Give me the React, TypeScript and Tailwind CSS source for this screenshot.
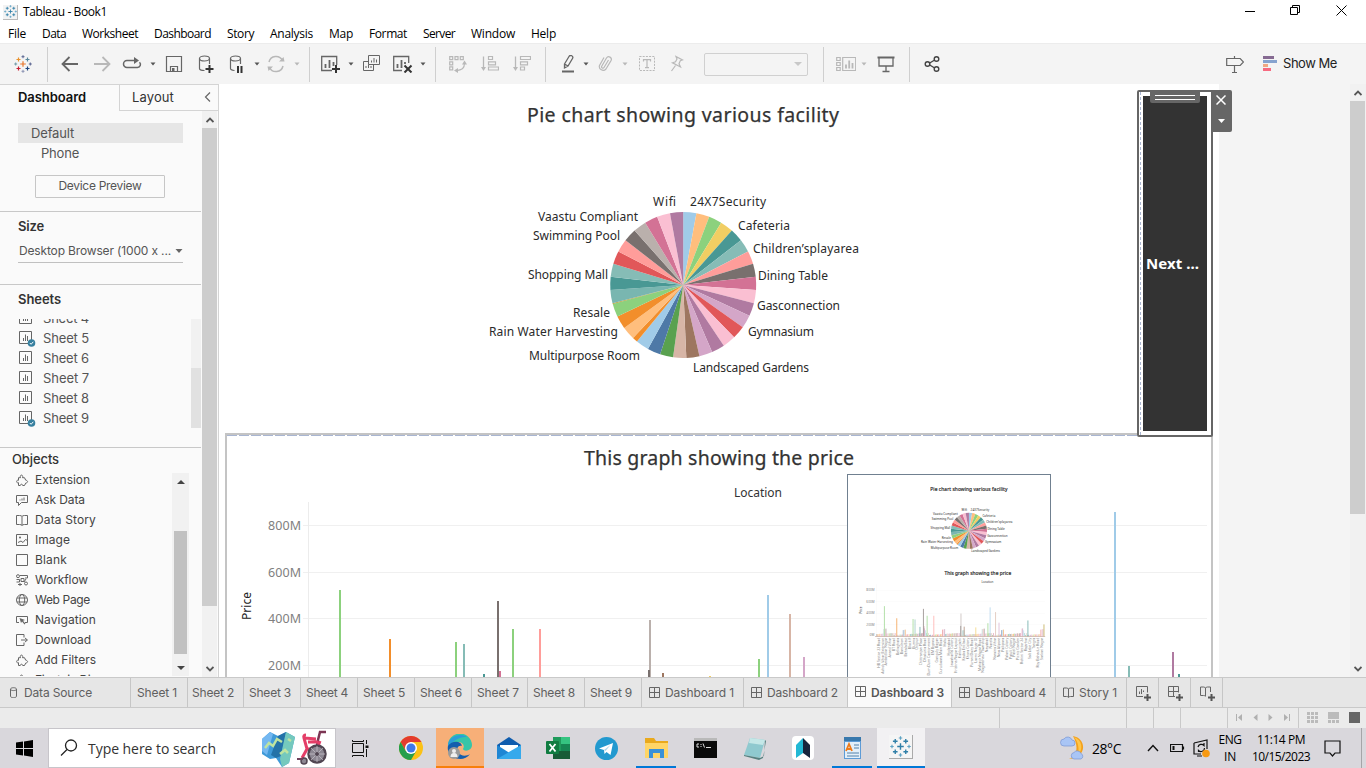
import React, { useLayoutEffect, useRef } from "react";
import type { ReactNode } from "react";

const UI = "font-['Inter','Liberation_Sans',sans-serif]";
const SEGOE = "font-['Open_Sans','Noto_Sans',sans-serif]";

/* Text whose tracking is computed so that it fills a given width. */
function Fit({ w, children, className = "" }: { w: number; children: string; className?: string }) {
  const ref = useRef<HTMLSpanElement>(null);
  useLayoutEffect(() => {
    const el = ref.current;
    if (!el) return;
    el.style.letterSpacing = "0px";
    const natural = el.getBoundingClientRect().width;
    el.style.letterSpacing = `${(w - natural) / children.length}px`;
  }, [w, children]);
  return (
    <span ref={ref} className={`inline-block whitespace-pre ${className}`}>
      {children}
    </span>
  );
}

function Svg({ w = 18, h = 18, className = "", children }: { w?: number; h?: number; className?: string; children: ReactNode }) {
  return (
    <svg width={w} height={h} viewBox={`0 0 ${w} ${h}`} className={`block shrink-0 ${className}`} fill="none">
      {children}
    </svg>
  );
}

const BLUE_MARK = ["#2f7fa8", "#2f7fa8", "#2f7fa8", "#2f7fa8", "#5fa3c4", "#5fa3c4", "#5fa3c4", "#5fa3c4", "#2f7fa8"];
const COLOR_MARK = ["#e8912d", "#59879b", "#c72035", "#1f457e", "#5b6591", "#7199a6", "#5b6591", "#8a92b2", "#e8762c"];

function TableauMark({ size, colors, className = "" }: { size: number; colors: string[]; className?: string }) {
  const plus = (x: number, y: number, r: number) => `M${x - r} ${y}h${2 * r}M${x} ${y - r}v${2 * r}`;
  const marks: [number, number, number][] = [
    [4.5, 4.5, 2], [13.5, 4.5, 2], [4.5, 13.5, 2], [13.5, 13.5, 2],
    [9, 1.7, 1.5], [1.7, 9, 1.5], [16.3, 9, 1.5], [9, 16.3, 1.5], [9, 9, 2.8],
  ];
  return (
    <svg width={size} height={size} viewBox="0 0 18 18" className={`block shrink-0 ${className}`}>
      {marks.map(([x, y, r], i) => (
        <path key={i} d={plus(x, y, r)} stroke={colors[i]} strokeWidth={i < 4 || i === 8 ? 1.2 : 1} />
      ))}
    </svg>
  );
}

function Caret({ light = false, className = "" }: { light?: boolean; className?: string }) {
  return (
    <svg width="6" height="4" viewBox="0 0 6 4" className={`block shrink-0 ${className}`}>
      <path d="M.5 .5h5L3 3.5z" fill={light ? "#b8b8b8" : "#555"} />
    </svg>
  );
}

const Sep = ({ className = "" }: { className?: string }) => <div className={`h-[35px] w-px shrink-0 bg-[#cfcfcf] ${className}`} />;

/* ---------- Charts ---------- */

const SLICES: [string, number][] = [
  ["#a0cbe8", 1], ["#ffbe7d", 1], ["#8cd17d", 1], ["#f1ce63", 1], ["#499894", 1], ["#86bcb6", 1], ["#ff9d9a", 1],
  ["#79706e", 1], ["#d37295", 1], ["#fabfd2", 1], ["#b07aa1", 1], ["#d4a6c8", 1], ["#e15759", 1], ["#fabfd2", 1],
  ["#b07aa1", 1], ["#d4a6c8", 1], ["#9d7660", 1], ["#d7b5a6", 1], ["#59a14f", 1], ["#4e79a7", 1], ["#a0cbe8", 1],
  ["#f28e2b", 0.4], ["#ffbe7d", 1], ["#f28e2b", 1], ["#8cd17d", 1], ["#b6992d", 0.07], ["#79b6b0", 1], ["#499894", 1],
  ["#86bcb6", 1], ["#e15759", 1], ["#ff9d9a", 1], ["#79706e", 1], ["#bab0ac", 1], ["#d37295", 1], ["#fabfd2", 1], ["#b07aa1", 1],
];

const PIE_LABELS: [string, number, number, number][] = [
  ["Wifi", 653, 206, 23], ["24X7Security", 690, 206, 76], ["Cafeteria", 738, 230, 52],
  ["Children’splayarea", 753, 253, 106], ["Dining Table", 758, 280, 70], ["Gasconnection", 757, 310, 83],
  ["Gymnasium", 748, 336, 66], ["Landscaped Gardens", 693, 372, 116], ["Multipurpose Room", 529, 360, 111],
  ["Rain Water Harvesting", 489, 336, 129], ["Resale", 573, 317, 37], ["Shopping Mall", 528, 279, 80],
  ["Swimming Pool", 533, 240, 87], ["Vaastu Compliant", 538, 221, 100],
];

function Pie({ soft = false }: { soft?: boolean }) {
  const total = SLICES.reduce((s, [, v]) => s + v, 0);
  const cx = 683.2, cy = 285, r = 73;
  let acc = 0;
  const at = (t: number) => `${cx + r * Math.sin(t)} ${cy - r * Math.cos(t)}`;
  return (
    <g fontFamily="'Noto Sans', sans-serif">
      <text x="527" y="122" fontSize="19.5" fill="#333" stroke="#333" strokeWidth={soft ? 0.8 : 0.25} textLength="312">Pie chart showing various facility</text>
      {SLICES.map(([color, v], i) => {
        const a = (acc / total) * Math.PI * 2;
        acc += v;
        const b = (acc / total) * Math.PI * 2;
        return <path key={i} d={`M${cx} ${cy}L${at(a)}A${r} ${r} 0 0 1 ${at(b)}Z`} fill={color} />;
      })}
      {PIE_LABELS.map(([t, x, y, w]) => (
        <text key={t} x={x} y={y} fontSize="12" fill="#2a2a2a" textLength={w}>{t}</text>
      ))}
    </g>
  );
}

const BARS: [number, number, string][] = [
  [339, 590, "#8cd17d"], [389, 639, "#f28e2b"], [455, 642, "#8cd17d"], [463, 644, "#86bcb6"], [483, 674, "#499894"],
  [499, 671, "#d37295"], [497, 601, "#79706e"], [512, 629, "#8cd17d"], [539, 629, "#ff9d9a"], [649, 620, "#bab0ac"],
  [648, 670, "#79706e"], [662, 673, "#9d7660"], [709, 676, "#f1ce63"], [758, 659, "#8cd17d"], [767, 595, "#a0cbe8"],
  [789, 614, "#d7b5a6"], [803, 657, "#d4a6c8"], [920, 648, "#499894"], [985, 664, "#b6992d"], [1114, 512, "#a0cbe8"],
  [1128, 666, "#86bcb6"], [1172, 652, "#b07aa1"], [1178, 674, "#499894"],
];

const LOCATIONS = [
  "HB Sector 22 Road", "Ashok Vihar Extension", "Ambedkar Nagar", "Anand Vihar", "BT Road", "Beliaghata", "Bansdroni", "Behala East",
  "Block F", "Burma", "Chitpur", "Chittranjan Place", "Dhakuria Road", "Dum Dum Cantonment", "EM Bypass", "Ganguly Bagan",
  "Gurudwara Main Road", "Haltu", "Hyderabad", "Jawaharlal Colony", "Krishna Nagar Layout", "Kankurgachi", "Kasba Enclave", "Khora Colony",
  "Purani Dairy Road", "Laxmi Nagar III", "Mahavir Nagar Road", "Nagarbhavi Township", "Nayabad", "Narela", "Naraina Vihar", "New Alipore",
  "Paikpara", "Palam Colony", "Patuli Colony", "Patel Nagar", "Picnic Garden", "Rohini Sector 24", "Rajarhat", "Salt Lake City",
  "Tangra", "Roy Bahadur Road", "Sarkari Nagar",
];

const LOW_BARS = Array.from({ length: 165 }, (_, i) => {
  const n = (i * 7919 + 31) % 97;
  return { x: 309 + i * 4.1, h: 5 + (n % 9) + (n % 7 === 0 ? 19 : 0), c: SLICES[n % SLICES.length][0] };
});

function Price({ end = 1207, soft = false }: { end?: number; soft?: boolean }) {
  return (
    <g fontFamily="'Noto Sans', sans-serif">
      <text x="584" y="465" fontSize="19.5" fill="#333" stroke="#333" strokeWidth={soft ? 0.8 : 0.25} textLength="270">This graph showing the price</text>
      <text x="734" y="497" fontSize="12" fill="#333" textLength="48">Location</text>
      {[["800M", 525], ["600M", 572], ["400M", 618], ["200M", 665]].map(([t, y]) => (
        <g key={t}>
          <rect x="303" y={y} width={end - 303} height="1" fill="#f0f0f0" />
          <text x="268" y={Number(y) + 5} fontSize="12.5" fill="#808080" textLength="33">{t}</text>
        </g>
      ))}
      <rect x="308" y="502" width="1" height="212" fill="#ececec" />
      <text transform="translate(251 620) rotate(-90)" fontSize="12" fill="#222" textLength="28">Price</text>
      <g opacity={soft ? 0.65 : 1}>
        {LOW_BARS.map((b, i) => <rect key={i} x={b.x} y={712 - b.h} width="3" height={b.h} fill={b.c} />)}
        {BARS.filter(([x]) => x < end).map(([x, y, c]) => (
          <rect key={x} x={x} y={y} width={soft ? 4 : 2} height={712 - y} fill={c} />
        ))}
      </g>
      <rect x="303" y="712" width={end - 303} height="2" fill="#b08878" />
      {soft && <text x="281" y="710" fontSize="13" fill="#787878">0M</text>}
      {soft && LOCATIONS.map((t, i) => (
        <text key={t} transform={`translate(${322 + i * 15.7} 718) rotate(-90)`} textAnchor="end" fontSize="14" fill="#888">{t}</text>
      ))}
    </g>
  );
}

/* ---------- Title, menu and toolbar ---------- */

function TitleBar() {
  return (
    <div className={`flex h-6 items-center bg-white text-black ${SEGOE}`}>
      <div className="ml-[3px] flex h-[15px] w-[15px] items-center justify-center border-r border-b border-[#bbb] bg-[#f3f3f3]">
        <TableauMark size={13} colors={BLUE_MARK} />
      </div>
      <Fit w={84} className="ml-[5px] text-[12px]">Tableau - Book1</Fit>
      <div className="ml-auto flex items-center pr-[19px] pb-[3px]">
        <Svg w={10} h={10}><path d="M0 5.5h10" stroke="#000" /></Svg>
        <Svg w={11} h={11} className="ml-[35px]"><path d="M.5 2.5h7v7h-7zM2.5 2.5v-2h7v7h-2" stroke="#000" /></Svg>
        <Svg w={11} h={11} className="ml-[35px]"><path d="M.5 .5l10 10M10.5 .5l-10 10" stroke="#000" /></Svg>
      </div>
    </div>
  );
}

const MENU: [string, number, number][] = [
  ["File", 34, 18], ["Data", 40, 24], ["Worksheet", 72, 56], ["Dashboard", 73, 57], ["Story", 43, 27], ["Analysis", 59, 43],
  ["Map", 40, 24], ["Format", 54, 38], ["Server", 48, 32], ["Window", 60, 44], ["Help", 40, 25],
];

function MenuBar() {
  return (
    <div className={`flex h-[19px] items-center bg-white pl-2 text-[12px] text-black ${SEGOE}`}>
      {MENU.map(([t, cell, w]) => (
        <div key={t} className="shrink-0" style={{ width: cell }}><Fit w={w}>{t}</Fit></div>
      ))}
    </div>
  );
}

function Toolbar() {
  const d = "#666", l = "#b8b8b8", k = "#333";
  return (
    <div className={`flex h-[41px] items-center border-t border-[#ececec] bg-[#f4f4f4] ${UI}`}>
      <TableauMark size={18} colors={COLOR_MARK} className="ml-[14px]" />
      <Sep className="ml-[15px]" />
      <Svg className="ml-[13px]"><path d="M1.500 9h15.500M8.500 2L1.500 9l7 7" stroke={d} strokeWidth="1.800" /></Svg>
      <Svg className="ml-[14px]"><path d="M1 9h15.500M9.500 2l7 7-7 7" stroke={l} strokeWidth="1.800" /></Svg>
      <Svg w={20} className="ml-[11px]"><path d="M15 12.500h.500a3 3 0 0 0 2-5.200M7 12.500h8M7 12.500H5a3.500 3.500 0 0 1 0-7h8" stroke={d} strokeWidth="1.500" /><path d="M12 2l5 3.500-5 3.500z" fill={d} /></Svg>
      <Caret className="ml-[8px]" />
      <Svg className="ml-[9px]"><path d="M1.500 1.500h15v15h-15zM5.500 16v-4.500h7V16" stroke={d} strokeWidth="1.200" /><path d="M7 13h2.500v3H7z" fill={d} /></Svg>
      <Svg className="ml-[14px]"><ellipse cx="7.500" cy="3.500" rx="5" ry="2.500" stroke={d} strokeWidth="1.200" /><path d="M2.500 3.500v10c0 1.200 2 2 5 2M12.500 3.500V9" stroke={d} strokeWidth="1.200" /><path d="M12.500 10v8M8.500 14h8" stroke={k} strokeWidth="2" /></Svg>
      <Svg className="ml-[13px]"><ellipse cx="7.500" cy="3.500" rx="5" ry="2.500" stroke={d} strokeWidth="1.200" /><path d="M2.500 3.500v10c0 1 1.500 1.700 4 2M12.500 3.500V9" stroke={d} strokeWidth="1.200" /><path d="M10 11v7M13.500 11v7" stroke={k} strokeWidth="2" /></Svg>
      <Caret className="ml-[8px]" />
      <Svg className="ml-[7px]"><path d="M2 7a7.200 7.200 0 0 1 13.500-1.500M16 11A7.200 7.200 0 0 1 2.500 12.500" stroke={l} strokeWidth="1.500" /><path d="M12 6.500h5.500L16.500 2zM6 11.500H.500l1 4.500z" fill={l} /></Svg>
      <Caret light className="ml-[9px]" />
      <Sep className="ml-[9px]" />
      <Svg w={20} className="ml-[11px]"><path d="M11 15.500H.700V1.500h15V10" stroke={d} strokeWidth="1.300" /><path d="M4.500 9v4M8.500 5v8M12.500 7v4" stroke={d} strokeWidth="1.800" /><path d="M15 10v8M11 14h8" stroke={k} strokeWidth="2" /></Svg>
      <Caret className="ml-[7px]" />
      <Svg className="ml-[8px]"><path d="M6.500 .5h11v9h-11zM11.500 9.500v6H1.500v-9h5" stroke={d} /><path d="M9.500 5.500v2M12 3v4.500M14.500 4.500v3M4 11v2M6.500 9.500V13M9 11v2" stroke={d} /></Svg>
      <Svg w={20} className="ml-[13px]"><path d="M9 15.500H.700V1.500h15V8" stroke={d} strokeWidth="1.300" /><path d="M4.500 9v4M8.500 5v8M12 7v2" stroke={d} strokeWidth="1.800" /><path d="M11.500 10.500l7 7M18.500 10.500l-7 7" stroke={k} strokeWidth="2" /></Svg>
      <Caret className="ml-[7px]" />
      <Sep className="ml-[9px]" />
      <Svg className="ml-[13px]"><path d="M.7 1.700h3v3h-3zM6 1.700h3v3H6zM11.300 1.700h3v3h-3zM.7 6.800h3v3h-3zM.7 11.800h3v3h-3zM15.500 8c0 5-2 7-9 7.500" stroke={l} strokeWidth="1.200" /><path d="M13 9.500L15.500 5.500 18 9.500zM9 13v5l-4-2.500z" fill={l} /></Svg>
      <Svg className="ml-[14px]"><path d="M2.500 1.500V14" stroke={l} strokeWidth="1.300" /><path d="M0 12h5l-2.500 4z" fill={l} /><path d="M7.500 1.500h4v3h-4zM7.500 6.800h7v3h-7zM7.500 12h10v3h-10z" stroke={l} strokeWidth="1.200" /></Svg>
      <Svg className="ml-[14px]"><path d="M2.500 1.500V14" stroke={l} strokeWidth="1.300" /><path d="M0 12h5l-2.500 4z" fill={l} /><path d="M7.500 1.500h10v3h-10zM7.500 6.800h7v3h-7zM7.500 12h4v3h-4z" stroke={l} strokeWidth="1.200" /></Svg>
      <Sep className="ml-[14px]" />
      <Svg w={14} className="ml-[15px]"><path d="M3.500 9L8 1.500a1.500 1.500 0 0 1 3.500 2L7 11l-3.500 2zM3.500 9L7 11" stroke={d} strokeWidth="1.300" /><path d="M1 16.500h12" stroke={d} strokeWidth="2" /></Svg>
      <Caret className="ml-[8px]" />
      <Svg w={14} className="ml-[9px]"><path d="M10.500 5L6 12.500a1.300 1.300 0 0 1-2.300-1.300L8.500 3a2.600 2.600 0 0 1 4.500 2.600L8 14a3.800 3.800 0 0 1-6.500-3.600L6 2.500" stroke={l} strokeWidth="1.200" /></Svg>
      <Caret light className="ml-[10px]" />
      <Svg className="ml-[10px]"><rect x="1.500" y="1.500" width="15" height="14" stroke={l} strokeDasharray="2 1.200" /><path d="M5.500 6.500V4.700h7v1.800M9 4.700v8M7 12.700h4" stroke={l} strokeWidth="1.200" /></Svg>
      <Svg w={14} className="ml-[14px]"><path d="M6 1.500l6.500 3.500-2.200.8-1.300 3 1.500 3.200-8-4.200 3-1L7 4zM5.500 10.500L1.500 16" stroke={l} strokeWidth="1.200" /></Svg>
      <div className="ml-[20px] flex h-[23px] w-[104px] items-center justify-end rounded-[2px] border border-[#d0d0d0] pr-[5px]">
        <svg width="8" height="4" viewBox="0 0 8 4"><path d="M0 0h8L4 4z" fill="#c8c8c8" /></svg>
      </div>
      <Sep className="ml-[15px]" />
      <Svg w={20} className="ml-[12px]"><path d="M.7 2.500h3.500v3H.7zM.7 7.500h3.500v3H.7zM.7 12.500h3.500v3H.7zM6.700 2.500h13v13h-13z" stroke={l} strokeWidth="1.200" /><path d="M10 9.500v4M13.200 5.500v8M16.500 8v5.500" stroke={l} strokeWidth="1.800" /></Svg>
      <Caret light className="ml-[5px]" />
      <Svg className="ml-[10px]"><path d="M.5 2.500h17" stroke={d} strokeWidth="2" /><path d="M2 3v8h14V3M9 11v5M5.500 16.500h7" stroke={d} strokeWidth="1.300" /></Svg>
      <Sep className="ml-[14px]" />
      <Svg w={16} className="ml-[14px]"><circle cx="3.500" cy="9" r="2.300" stroke="#444" strokeWidth="1.400" /><circle cx="12.500" cy="4" r="2.300" stroke="#444" strokeWidth="1.400" /><circle cx="12.500" cy="14" r="2.300" stroke="#444" strokeWidth="1.400" /><path d="M5.700 8l5-3M5.700 10l5 3" stroke="#444" strokeWidth="1.400" /></Svg>
      <Svg className="ml-auto"><path d="M.7 3.500h13.500L17.500 7l-3.300 3.500H.7zM8.500 1v2.500M8.500 10.500v7M6 17.500h5" stroke={d} strokeWidth="1.200" /></Svg>
      <Svg w={14} h={16} className="ml-[19px]"><path d="M0 1.500h11" stroke="#866a92" strokeWidth="3" /><path d="M0 5.500h14" stroke="#86a3cf" strokeWidth="3" /><path d="M0 9.500h5" stroke="#f0a883" strokeWidth="3" /><path d="M0 13.500h8" stroke="#f76a80" strokeWidth="3" /></Svg>
      <Fit w={54} className="mr-[29px] ml-[6px] text-[13px] text-[#222]">Show Me</Fit>
    </div>
  );
}

/* ---------- Left pane ---------- */

function SheetIcon({ used }: { used?: boolean }) {
  return (
    <Svg w={17} h={17} className="mt-px">
      <path d="M.500 1.500h12v12H.500z" stroke="#666" />
      <path d="M4.500 8v3M6.500 4.500V11M8.500 6v5" stroke="#666" />
      {used && <><circle cx="12.500" cy="13" r="3.800" fill="#37809f" /><path d="M10.800 13l1.300 1.300 2.200-2.500" stroke="#fff" /></>}
    </Svg>
  );
}

const SHEETS: [string, boolean][] = [["Sheet 4", false], ["Sheet 5", true], ["Sheet 6", false], ["Sheet 7", false], ["Sheet 8", false], ["Sheet 9", true]];

const puzzle = <path d="M2.500 11.500V8.700C.3 9.800-.2 5.500 2.500 6.300V3.700h2C3.300 .2 7.700 .2 6.500 3.700h2l1.200 2.500c2.500.3 2.500 2.600 0 2.900L8.500 11.500H6.700c-.2-1.700-2.200-1.700-2.400 0z" stroke="#666" />;

const OBJECTS: [string, number, ReactNode][] = [
  ["Extension", 55, puzzle],
  ["Ask Data", 50, <path d="M.5 1.500h11v7h-6l-3 3v-3h-2zM4 6.500v-1M6 6.500v-2M8 6.500v-3" stroke="#666" />],
  ["Data Story", 61, <path d="M6 2.500v9M.500 1.500h3Q5.500 1.500 6 2.500 6.500 1.500 8.500 1.500h3v9h-3Q6.500 10.500 6 11.500 5.500 10.500 3.500 10.500h-3z" stroke="#666" />],
  ["Image", 35, <><path d="M.500 .5h11v11H.500zM2 8.500l3-1.500 2 1.500 2.500-3 2 1" stroke="#666" /><circle cx="4" cy="3.500" r="1" fill="#666" /></>],
  ["Blank", 32, <path d="M.500 .5h11v11H.500z" stroke="#666" />],
  ["Workflow", 53, <><circle cx="2" cy="2.200" r="1.500" stroke="#666" /><circle cx="10" cy="9.500" r="1.500" stroke="#666" /><path d="M4 1.500h7.500v2.500H9M5 4.500h3v3H5zM.500 5.500h3v2.500h-3M4 9v3M2 10.500h4M8 8l2-3" stroke="#666" /></>],
  ["Web Page", 55, <><circle cx="6" cy="6" r="5.500" stroke="#666" /><ellipse cx="6" cy="6" rx="2.700" ry="5.500" stroke="#666" /><path d="M1 4h10M1 8h10" stroke="#666" /></>],
  ["Navigation", 61, <><path d="M3 8.500H.500v-6h11v6H9" stroke="#666" /><path d="M3.500 4l5.500 2-2 .8 2.500 3-1 .7-2.500-3L5 9z" fill="#666" /></>],
  ["Download", 56, <path d="M8 3.500V.500H.500v11H8v-3M5 6h6M9 4l2.500 2L9 8" stroke="#666" />],
  ["Add Filters", 61, puzzle],
  ["Einstein Discovery", 98, puzzle],
];

function Chevron({ up }: { up?: boolean }) {
  return <Svg w={8} h={6}><path d={up ? "M.5 5L4 1.500 7.500 5" : "M.5 1L4 4.500 7.500 1"} stroke="#555" strokeWidth="1.800" /></Svg>;
}

function SidePane() {
  return (
    <div className={`flex h-[593px] w-[219px] shrink-0 flex-col border-t border-r border-[#d4d4d4] bg-[#fafafa] text-[13px] text-[#555] ${UI}`}>
      <div className="flex h-[26px] shrink-0">
        <div className="w-[119px] pt-[3px] pl-[18px]"><Fit w={68} className="font-semibold text-[#111]">Dashboard</Fit></div>
        <div className="flex flex-1 justify-between border-b border-l border-[#d4d4d4] pt-[3px] pr-[7px] pl-3">
          <Fit w={42} className="text-[#333]">Layout</Fit>
          <Svg w={7} h={10} className="mt-1"><path d="M6 .5L1.500 5 6 9.500" stroke="#666" strokeWidth="1.200" /></Svg>
        </div>
      </div>
      <div className="flex min-h-0 flex-1">
        <div className="flex w-[201px] flex-col overflow-hidden">
          <div className="mt-3 ml-[18px] flex h-5 w-[165px] shrink-0 items-center bg-[#e6e6e6] pt-[2px] pl-[13px]"><Fit w={43}>Default</Fit></div>
          <div className="ml-[41px] flex h-5 shrink-0 items-center pt-[2px]"><Fit w={38}>Phone</Fit></div>
          <div className="mt-3 ml-[35px] flex h-[23px] w-[130px] shrink-0 items-center justify-center rounded-[1px] border border-[#c6c6c6] pb-[2px] text-[12px]"><Fit w={83}>Device Preview</Fit></div>
          <div className="mt-[13px] h-px shrink-0 bg-[#c8c8c8]" />
          <div className="mt-[5px] ml-[18px] h-5 shrink-0"><Fit w={26} className="font-semibold text-[#333]">Size</Fit></div>
          <div className="mt-[4px] ml-[18px] flex h-[22px] w-[165px] shrink-0 items-center justify-between border-b border-[#c0c0c0] pb-px pl-px text-[12px]">
            <Fit w={152}>Desktop Browser (1000 x ...</Fit>
            <svg width="8" height="5" viewBox="0 0 8 5"><path d="M.5 0h7L4 4z" fill="#666" /></svg>
          </div>
          <div className="mt-[21px] h-px shrink-0 bg-[#c8c8c8]" />
          <div className="mt-[5px] ml-[18px] h-5 shrink-0"><Fit w={43} className="font-semibold text-[#333]">Sheets</Fit></div>
          <div className="mt-[9px] flex h-[109px] shrink-0">
            <div className="flex w-[191px] flex-col justify-end overflow-hidden">
              {SHEETS.map(([t, used]) => (
                <div key={t} className="flex h-5 shrink-0 items-center gap-[7px] pl-[19px]"><SheetIcon used={used} /><Fit w={46} className="pt-[2px]">{t}</Fit></div>
              ))}
            </div>
            <div className="flex w-[10px] flex-col justify-end bg-[#f1f1f1]"><div className="h-[60px] bg-[#e1e1e1]" /></div>
          </div>
          <div className="mt-[19px] h-px shrink-0 bg-[#c8c8c8]" />
          <div className="mt-[2px] ml-3 h-[20px] shrink-0"><Fit w={47} className="font-medium text-[#333]">Objects</Fit></div>
          <div className="flex h-[206px] shrink-0">
            <div className="w-[172px] overflow-hidden text-[12px] text-[#444]">
              {OBJECTS.map(([t, w, icon]) => (
                <div key={t} className="flex h-5 items-center pl-4"><Svg w={13} h={13}>{icon}</Svg><Fit w={w} className="ml-[6px]">{t}</Fit></div>
              ))}
            </div>
            <div className="mt-[3px] flex w-[17px] flex-col items-center bg-[#f1f1f1] pt-[7px] pb-[6px]">
              <svg width="8" height="4" className="block shrink-0"><path d="M0 4h8L4 0z" fill="#444" /></svg>
              <div className="mt-[47px] h-[123px] w-[13px] shrink-0 bg-[#c1c1c1]" />
              <svg width="8" height="4" className="mt-auto block shrink-0"><path d="M0 0h8L4 4z" fill="#444" /></svg>
            </div>
          </div>
        </div>
        <div className="ml-px flex w-[15px] flex-col items-center bg-[#f1f1f1]">
          <div className="flex h-[17px] items-center"><Chevron up /></div>
          <div className="h-[478px] w-full bg-[#cdcdcd]" />
          <div className="mt-auto flex h-[17px] items-center"><Chevron /></div>
        </div>
      </div>
    </div>
  );
}

/* ---------- Canvas ---------- */

function Canvas() {
  return (
    <div className="relative flex h-[593px] flex-1 overflow-hidden bg-[#f4f4f4]">
      <div className="w-[1000px] shrink-0 bg-white">
        <svg width="1000" height="349" viewBox="219 84 1000 349" className="block"><Pie /></svg>
        <div className="ml-[6px] h-[244px] w-[988px] border-2 border-b-0 border-[#c4c4c4]">
          <svg width="984" height="242" viewBox="227 435 984 242" className="block">
            <path d="M227 435h984" stroke="#a9b6d2" strokeWidth="2" strokeDasharray="10 2" />
            <Price />
          </svg>
        </div>
      </div>
      <div className="ml-auto flex w-4 flex-col items-center bg-[#f1f1f1] pr-px">
        <div className="flex h-[17px] items-center"><Chevron up /></div>
        <div className="h-[413px] w-[15px] bg-[#cdcdcd]" />
        <div className="mt-auto flex h-[17px] items-center"><Chevron /></div>
      </div>

      <div className="absolute top-[6px] left-[918px] flex">
        <div className="relative flex h-[347px] w-[76px] rounded-[2px] border-2 border-[#666] bg-white p-1">
          <div className="absolute top-0 left-px h-full border-l border-dashed border-[#a9b6d2]" />
          <div className="flex w-full items-center bg-[#333] pl-[3px] font-['Noto_Sans',sans-serif] text-[15px] font-bold text-white"><Fit w={53}>Next ...</Fit></div>
          <div className="absolute -top-px left-[11px] flex h-[12px] w-[50px] flex-col gap-[3px] rounded-b-[2px] bg-[#666] px-[5px] pt-1">
            <div className="h-px bg-white" /><div className="h-px bg-white" />
          </div>
        </div>
        <div className="-ml-[2px] flex h-[42px] w-[21px] flex-col items-center gap-[14px] rounded-r-[2px] bg-[#666] pt-[5px] pr-px">
          <Svg w={10} h={10}><path d="M.5 .5l9 9M9.500 .5l-9 9" stroke="#fff" strokeWidth="1.500" /></Svg>
          <svg width="7" height="4" className="block"><path d="M0 0h7L3.500 4z" fill="#fff" /></svg>
        </div>
      </div>

      <div className="absolute top-[390px] left-[628px] h-[204px] w-[204px] border border-[#708090] bg-white">
        <svg width="202" height="202" viewBox="848 475 202 202" className="block">
          <g transform="translate(969 530.800) scale(.247) translate(-683.500 -285)">
            <Pie soft />
            <Price end={992} soft />
          </g>
        </svg>
      </div>
    </div>
  );
}

/* ---------- Sheet tabs and status bar ---------- */

const grid = <path d="M.500 .5h10v10H.500zM5.500 .5v10M.500 5.500h10" stroke="#666" />;
const book = <path d="M5.500 2v8M.500 1h3q1.500 0 2 1 .500-1 2-1h3v8.500h-3q-1.500 0-2 1-.500-1-2-1h-3z" stroke="#666" />;
const cylinder = <path d="M2.500 2.200c0-2 6-2 6 0v7c0 2-6 2-6 0zM2.500 2.200c0 1.800 6 1.800 6 0" stroke="#666" />;

const TABS: { t: string; cell: string; w: number; icon?: ReactNode; active?: boolean }[] = [
  { t: "Data Source", cell: "w-[131px] pl-2", w: 68, icon: cylinder },
  { t: "Sheet 1", cell: "w-[57px] pl-[6px]", w: 40 }, { t: "Sheet 2", cell: "w-[56px] pl-[4px]", w: 42 },
  { t: "Sheet 3", cell: "w-[57px] pl-[5px]", w: 42 }, { t: "Sheet 4", cell: "w-[57px] pl-[5px]", w: 42 },
  { t: "Sheet 5", cell: "w-[57px] pl-[5px]", w: 42 }, { t: "Sheet 6", cell: "w-[57px] pl-[5px]", w: 42 },
  { t: "Sheet 7", cell: "w-[56px] pl-[5px]", w: 42 }, { t: "Sheet 8", cell: "w-[57px] pl-[5px]", w: 42 },
  { t: "Sheet 9", cell: "w-[57px] pl-[5px]", w: 42 },
  { t: "Dashboard 1", cell: "w-[102px] pl-[7px]", w: 69, icon: grid }, { t: "Dashboard 2", cell: "w-[104px] pl-[7px]", w: 71, icon: grid },
  { t: "Dashboard 3", cell: "w-[104px] pl-[7px]", w: 73, icon: grid, active: true }, { t: "Dashboard 4", cell: "w-[104px] pl-[7px]", w: 71, icon: grid },
  { t: "Story 1", cell: "w-[71px] pl-[7px]", w: 38, icon: book },
];

function SheetTabs() {
  const add = <path d="M11.500 8v7M8 11.500h7" stroke="#555" strokeWidth="2" />;
  return (
    <div className={`flex h-[31px] border-y border-[#c9c9c9] bg-[#e6e6e6] text-[12px] text-[#606060] ${UI}`}>
      {TABS.map((x) => (
        <div key={x.t} className={`flex shrink-0 items-center border-r border-[#c6c6c6] ${x.cell} ${x.active ? "bg-[#fafafa] font-semibold text-[#555]" : "pt-px"}`}>
          {x.icon && <Svg w={11} h={11} className="mr-[5px] mb-[2px]">{x.icon}</Svg>}
          <Fit w={x.w}>{x.t}</Fit>
        </div>
      ))}
      {[
        <path key="s" d="M7 10.500H.500V.500h11v6M3.500 8V5.500M5.500 8V3M7.500 6V4.500" stroke="#666" />,
        <path key="d" d="M7 10.500H.500V.500h10v6M5.500 .5v10M.500 5.500h10" stroke="#666" />,
        <path key="b" d="M5.500 2v8M.500 1h3q1.500 0 2 1 .500-1 2-1h3v5M.500 1v8.500h3q1.500 0 2 1" stroke="#666" />,
      ].map((p, i) => (
        <div key={i} className="flex w-8 shrink-0 items-center justify-center border-r border-[#c6c6c6] pt-px pl-px"><Svg w={15} h={15}>{p}{add}</Svg></div>
      ))}
    </div>
  );
}

function StatusBar() {
  return (
    <div className="flex h-5 bg-[#ebebeb]">
      <div className="w-[1000px] border-r border-[#c9c9c9]" />
      <div className="w-[127px] border-r border-[#c9c9c9]" />
      <div className="w-[27px] border-r border-[#c9c9c9]" />
      <div className="w-[27px] border-r border-[#c9c9c9]" />
      <div className="w-[47px] border-r border-[#c9c9c9]" />
      <div className="flex w-[71px] items-center justify-between border-r border-[#c9c9c9] pr-2 pb-[2px] pl-2">
        <Svg w={7} h={7}><path d="M.500 0v7" stroke="#b0b0b0" /><path d="M6 0v7L2 3.500z" fill="#b0b0b0" /></Svg>
        <Svg w={5} h={7}><path d="M4.500 0v7L.5 3.500z" fill="#b0b0b0" /></Svg>
        <Svg w={5} h={7}><path d="M.5 0v7l4-3.500z" fill="#b0b0b0" /></Svg>
        <Svg w={7} h={7}><path d="M6.500 0v7" stroke="#b0b0b0" /><path d="M1 0v7l4-3.500z" fill="#b0b0b0" /></Svg>
      </div>
      <div className="flex flex-1 items-center gap-[10px] pb-[2px] pl-2">
        <Svg w={11} h={11}><path d="M0 1.500h11M0 5.500h11M0 9.500h11" stroke="#bbb" strokeWidth="3" strokeDasharray="3 1" /></Svg>
        <Svg w={11} h={11}><path d="M0 3.500h11" stroke="#bbb" strokeWidth="7" /><path d="M0 9.500h11" stroke="#bbb" strokeWidth="3" strokeDasharray="3 1" /></Svg>
        <div className="h-[11px] w-[11px] bg-[#666]" />
      </div>
    </div>
  );
}

/* ---------- Taskbar ---------- */

function Holiday() {
  return (
    <Svg w={68} h={38}>
      <path d="M1 10l8-7 8 4 8-4 9 5-6 26-7 4-6-9-6 1-8-5z" fill="#3f9ad8" />
      <path d="M1 10l8-7 3 2-6 21-5-4z" fill="#74b8f1" />
      <path d="M17 7l8-4-5 24-5 2-5-3z" fill="#2472a8" />
      <path d="M25 3l9 5-6 26-7 4-2-8z" fill="#75c9bd" />
      <path d="M4 19l4-5 4 3 4-7 5 3M19 25l5-4 3 3M27 10l3 2" stroke="#bfe4a0" strokeWidth="2.500" />
      <path d="M65 3h-6l-2 8-2 12" stroke="#7c3553" strokeWidth="2.500" />
      <path d="M45 6q-3 0-2 3l3 11h10l3-8M44 9l11 1M47 13h10M46 20l-5 9" stroke="#e43e68" strokeWidth="3" />
      <circle cx="56" cy="25" r="8.500" fill="#8c8792" stroke="#514652" strokeWidth="2.500" />
      <path d="M56 17v16M48 25h16M50 19l12 12M62 19L50 31" stroke="#cac4cd" strokeWidth=".7" />
      <circle cx="56" cy="25" r="2" fill="#514652" />
      <circle cx="43" cy="32" r="3" fill="#8c8792" stroke="#514652" strokeWidth="1.500" />
      <path d="M36 30h6" stroke="#70405b" strokeWidth="2" />
    </Svg>
  );
}

const APPS: { cell: string; icon: ReactNode }[] = [
  { cell: "w-[50px]", icon: <Svg w={24} h={24}><circle cx="12" cy="12" r="12" fill="#fbc116" /><path d="M1.600 6A12 12 0 0 1 22.400 6H12L6.800 15z" fill="#e33b2e" /><path d="M1.600 6A12 12 0 0 0 12 24l5.200-9H6.800z" fill="#269f4b" /><circle cx="12" cy="12" r="6" fill="#fff" /><circle cx="12" cy="12" r="4.500" fill="#3f79e8" /></Svg> },
  { cell: "w-[48px] bg-[#f7af78] border-b-2 border-[#f77f0c]", icon: <Svg w={26} h={26}><path d="M1 12A12 12 0 0 1 25 11c0 6-8 7-9 4 2-3 0-7-5-7-6 0-9 4-10 4z" fill="#36c5a8" /><path d="M1 13C0 3 12-2 20 3c-8-1-15 5-19 10z" fill="#2a9ed8" /><path d="M1 12c3-5 13-6 14 0-4-1-6 3-4 6 3 5 9 4 12 2-4 6-12 6-17 3-4-3-6-7-5-11z" fill="#145eae" /><circle cx="7" cy="19" r="6" fill="#9a9a9a" /><circle cx="7" cy="17" r="2" fill="#eee" /><path d="M3.500 23q0-4 3.500-4t3.500 4z" fill="#eee" /></Svg> },
  { cell: "w-[50px]", icon: <Svg w={24} h={24}><path d="M0 9L12 1l12 8v14H0z" fill="#0f5cae" /><path d="M3 9h18v9H3z" fill="#fff" /><path d="M0 9l14 9-14 5z" fill="#1f86d4" /><path d="M24 9v14H0z" fill="#36a9ec" /></Svg> },
  { cell: "w-[48px]", icon: <Svg w={24} h={24}><path d="M7 1h9v22H7z" fill="#1f9a5b" /><path d="M15 1h9v7h-9z" fill="#35c481" /><path d="M15 8h9v7h-9z" fill="#168653" /><path d="M7 15h17v8H7z" fill="#185c37" /><rect y="5" width="13" height="13" rx="1" fill="#107c41" /><path d="M3.500 8l6 7.500M9.500 8l-6 7.500" stroke="#fff" strokeWidth="1.800" /></Svg> },
  { cell: "w-[49px]", icon: <Svg w={23} h={23}><circle cx="11.500" cy="11.500" r="11.500" fill="#2299cf" /><path d="M4 11.500L18 6l-2.500 12-4-3-2 2-.500-4z" fill="#fff" /><path d="M9 13l6.500-5-5 6z" fill="#a9d4ea" /></Svg> },
  { cell: "w-[50px] relative", icon: <><Svg w={25} h={24}><path d="M1 2h9l2 3h12v17H1z" fill="#e9a91d" /><path d="M1 7h23v15H1z" fill="#ffd566" /><path d="M5 22v-9h15v9h-4v-5H9v5z" fill="#3a91d7" /></Svg><div className="absolute bottom-0 left-[5px] h-[2px] w-10 bg-[#0078d7]" /></> },
  { cell: "w-[48px]", icon: <Svg w={23} h={20}><path d="M0 0h23v20H0z" fill="#0a0a0a" /><path d="M0 1.500h23" stroke="#b9b9b9" strokeWidth="3" /><path d="M5 6H3v3h2M7 6v1M7 8v1M9 5.500l1.500 4M12 9.500h5" stroke="#ddd" /></Svg> },
  { cell: "w-[50px]", icon: <Svg w={24} h={24}><path d="M8 2l15 2-5 18-16-3z" fill="#8fc9cf" /><path d="M8 2l15 2-2 5-14-2z" fill="#c4e7e7" /><path d="M2 19l16 3 4-2 1-16 1 1-3 17-4 2-15-4z" fill="#56807f" /></Svg> },
  { cell: "w-[48px]", icon: <Svg w={22} h={24}><rect width="22" height="24" rx="4" fill="#fff" /><path d="M11 2v15l-7 5V9z" fill="#22b8d4" /><path d="M11 2l7 7v13l-7-5z" fill="#17253d" /></Svg> },
  { cell: "w-[50px] relative", icon: <><Svg w={19} h={24}><path d="M1 1h17v22H1z" fill="#5d9bd6" /><path d="M2 6h15v16H2z" fill="#e3eff9" /><path d="M1 1h17v4H1z" fill="#3878ad" /><path d="M3 15l3-7 3 7M4 13h4" stroke="#ee7a19" strokeWidth="1.800" /><path d="M11 9h5M11 12h5M4 17h12M4 20h12" stroke="#5280a8" /></Svg><div className="absolute bottom-0 left-[5px] h-[2px] w-10 bg-[#0078d7]" /></> },
  { cell: "w-[48px] bg-[#f2f1f3] border-b-2 border-[#0078d7]", icon: <div className="border-r border-b border-[#aaa] bg-[#f5f5f5] p-px"><TableauMark size={21} colors={BLUE_MARK} /></div> },
];

function Taskbar() {
  return (
    <div className={`flex h-10 items-center bg-[#d9d7dc] text-black ${SEGOE}`}>
      <div className="flex w-12 justify-center"><Svg w={17} h={17}><path d="M0 2.500l7-1V8H0zM8 1.400L17 0v8H8zM0 9h7v6.500l-7-1zM8 9h9v8l-9-1.400z" fill="#000" /></Svg></div>
      <div className="flex h-10 w-[288px] items-center border border-[#c7c5ca] bg-white pl-[11px]">
        <Svg w={18} h={18}><circle cx="11" cy="6.500" r="5.500" stroke="#222" strokeWidth="1.300" /><path d="M7 10.500L1 16.500" stroke="#222" strokeWidth="1.300" /></Svg>
        <Fit w={128} className="ml-[10px] text-[14px] text-[#333]">Type here to search</Fit>
        <div className="ml-auto pr-[6px]"><Holiday /></div>
      </div>
      <div className="flex w-[50px] justify-center pr-[2px]"><Svg w={17} h={17}><path d="M.500 3.500h11v9H.500zM.500 0v1.500h11V0M.500 17v-1.500h11V17M14.500 0v4M14.500 9v8" stroke="#111" /><path d="M13.500 5.500h3v2.500h-3z" fill="#111" /></Svg></div>
      {APPS.map((a, i) => <div key={i} className={`flex h-10 shrink-0 items-center justify-center ${a.cell}`}>{a.icon}</div>)}
      <div className="ml-auto flex items-center">
        <Svg w={25} h={26}><path d="M13 1c15 3 13 23-4 23 8-3 10-12 4-23z" fill="#f4a11c" /><path d="M14 2c9 3 9 13 4 18 1-6 1-12-4-18z" fill="#ffc64a" /><path d="M4 11a3.500 3.500 0 0 1 0-7 4.500 4.500 0 0 1 8 1 3 3 0 0 1 0 6zM14 24a3.300 3.300 0 0 1 0-6.500 4 4 0 0 1 7 1 3 3 0 0 1 0 5.500z" fill="#a9c5f5" stroke="#7895d3" strokeWidth=".7" /></Svg>
        <Fit w={29} className="ml-[7px] text-[14px]">28°C</Fit>
        <Svg w={12} h={8} className="ml-[26px]"><path d="M1 7l5-5.500L11 7" stroke="#111" strokeWidth="1.400" /></Svg>
        <Svg w={15} h={10} className="ml-[11px]"><path d="M.500 1.500h12v7H.500zM13.500 3.500v3" stroke="#111" strokeWidth="1.200" /><path d="M3.500 3v4" stroke="#111" strokeWidth="2" /></Svg>
        <Svg w={17} h={19} className="ml-[8px]"><path d="M1 4l13-3v9M1 4v11h7M4 17h5M5 8a3.500 3.500 0 0 1 6-1.500V4M11.500 9A3.500 3.500 0 0 1 5.500 11.500V13" stroke="#111" strokeWidth="1.200" /><circle cx="13" cy="14.500" r="3.800" fill="#f89a12" /></Svg>
        <div className="ml-[8px] flex w-[24px] flex-col items-center text-[12px] leading-[17px]"><Fit w={23}>ENG</Fit><Fit w={12}>IN</Fit></div>
        <div className="ml-[9px] flex w-[60px] flex-col items-center text-[12px] leading-[17px]"><Fit w={48}>11:14 PM</Fit><Fit w={58}>10/15/2023</Fit></div>
        <Svg w={17} h={17} className="ml-[13px]"><path d="M1 1h15v12h-5l-2.500 3L6 13H1z" stroke="#111" strokeWidth="1.200" /></Svg>
        <div className="mr-1 ml-[20px] h-10 w-px bg-[#a5a5a8]" />
      </div>
    </div>
  );
}

export default function App() {
  return (
    <div className="flex h-[768px] w-[1366px] flex-col overflow-hidden bg-white">
      <TitleBar />
      <MenuBar />
      <Toolbar />
      <div className="flex h-[593px] shrink-0">
        <SidePane />
        <Canvas />
      </div>
      <SheetTabs />
      <StatusBar />
      <Taskbar />
    </div>
  );
}
